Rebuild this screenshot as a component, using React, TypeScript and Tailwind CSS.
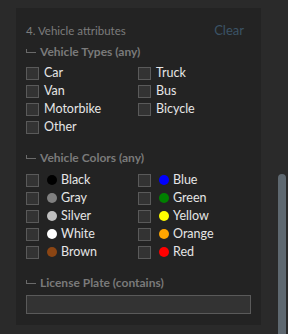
import React from 'react';

const types = [
  ['Car', 'Truck'],
  ['Van', 'Bus'],
  ['Motorbike', 'Bicycle'],
  ['Other', null],
];

const colors: [string, string][][] = [
  [['Black', '#000000'], ['Blue', '#0000ff']],
  [['Gray', '#808080'], ['Green', '#008000']],
  [['Silver', '#c0c0c0'], ['Yellow', '#ffff00']],
  [['White', '#ffffff'], ['Orange', '#ffa500']],
  [['Brown', '#8b4513'], ['Red', '#ff0000']],
];

const Box = () => (
  <span className="w-[13px] h-[13px] border border-[#5a5a5a] bg-[#333333] shrink-0"></span>
);

const Option = ({ label, dot }: { label: string; dot?: string }) => (
  <label className="flex items-center h-[18px] w-[112px]">
    <Box />
    {dot && <span className="ml-[8px] w-[10px] h-[10px] rounded-full shrink-0" style={{ background: dot }}></span>}
    <span className={`${dot ? 'ml-[4px]' : 'ml-[5px]'} text-[12.5px] text-[#e6e6e6] leading-none`}>{label}</span>
  </label>
);

const SubHeader = ({ text, className }: { text: string; className: string }) => (
  <div className={`h-[18px] flex items-center text-[12px] font-bold text-[#7a7a7a] ${className}`}>
    {/* tree corner mark */}
    <span className="w-[10px] h-[4px] border-l border-b border-[#6a6a6a] mr-[4px] -mt-[2px] shrink-0"></span>
    {text}
  </div>
);

export default function App() {
  return (
    <div
      className="w-[288px] h-[334px] bg-[#2a2a2a] flex overflow-hidden"
      style={{ fontFamily: '"Segoe UI", Lato, sans-serif' }}
    >
      <div className="pl-[16px] pt-[8px]">
        <div className="w-[245px] bg-[#232323] px-[10px] pt-[14px] pb-[11px]">
          {/* Header */}
          <div className="h-[18px] flex items-center justify-between">
            <span className="text-[11.5px] text-[#7c7c7c]">4. Vehicle attributes</span>
            <span className="text-[13px] text-[#3b5366] mr-[7px]">Clear</span>
          </div>

          {/* Vehicle types */}
          <SubHeader text="Vehicle Types (any)" className="mt-[3px]" />
          <div className="mt-[3px]">
            {types.map((row, i) => (
              <div key={i} className="flex">
                <Option label={row[0] as string} />
                {row[1] && <Option label={row[1]} />}
              </div>
            ))}
          </div>

          {/* Vehicle colors */}
          <SubHeader text="Vehicle Colors (any)" className="mt-[13px]" />
          <div className="mt-[4px]">
            {colors.map((row, i) => (
              <div key={i} className="flex">
                <Option label={row[0][0]} dot={row[0][1]} />
                <Option label={row[1][0]} dot={row[1][1]} />
              </div>
            ))}
          </div>

          {/* License plate */}
          <SubHeader text="License Plate (contains)" className="mt-[13px]" />
          <input
            className="mt-[3px] block w-[225px] h-[19px] bg-[#333333] border border-[#5a5a5a] outline-none"
            type="text"
          />
        </div>
      </div>

      {/* Scrollbar */}
      <div className="ml-auto mr-[2px] w-[8px] flex flex-col">
        <div className="mt-[174px] flex-1 bg-[#5e6870] rounded-t-[4px]"></div>
      </div>
    </div>
  );
}
